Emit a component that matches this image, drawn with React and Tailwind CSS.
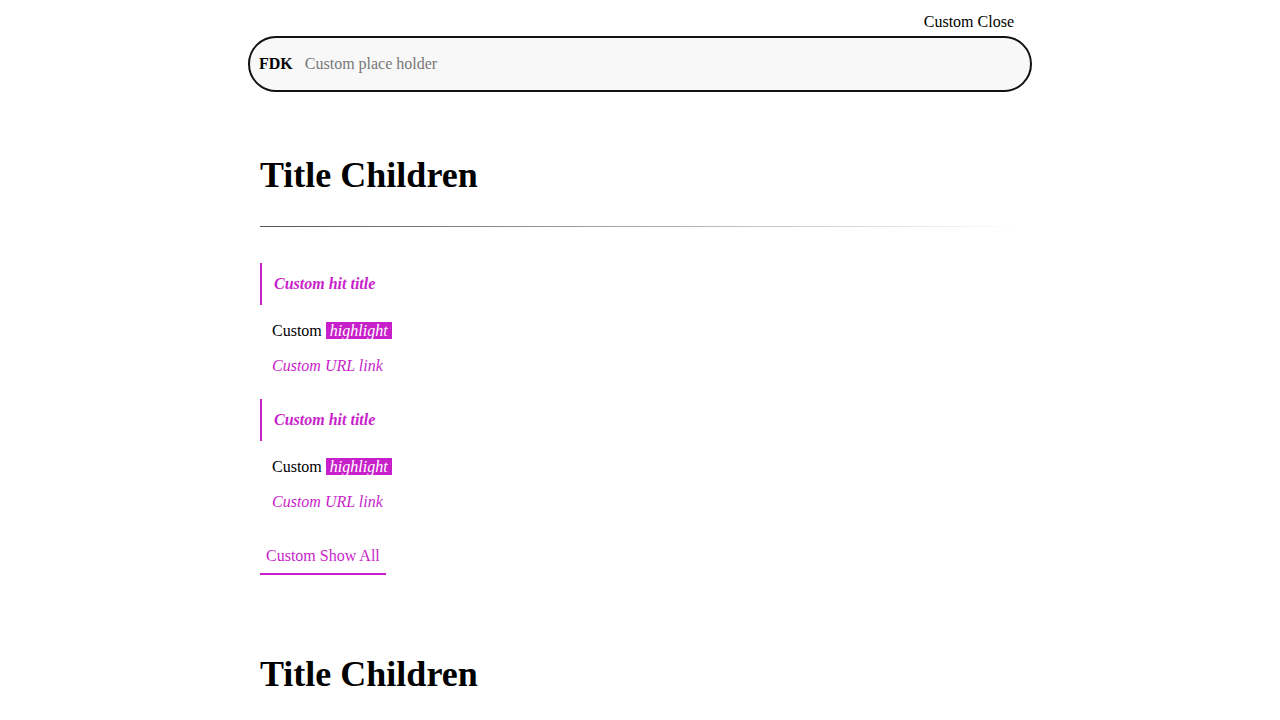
const HITS = [
  { id: 1, title: "Custom hit title", text: "Custom", mark: "highlight", link: "Custom URL link" },
  { id: 2, title: "Custom hit title", text: "Custom", mark: "highlight", link: "Custom URL link" },
];

function Section() {
  return (
    <section className="pt-[60px]">
      <h1 className="text-[36px] font-bold leading-[46px] text-black">Title Children</h1>
      <div className="mt-[28px] h-px bg-gradient-to-r from-[#555] to-transparent" />
      <div className="pt-[36px]">
        {HITS.map((h) => (
          <div key={h.id} className="mb-[24px]">
            <div className="border-l-2 border-[#c71fc9] pl-3 h-[42px] flex items-center">
              <span className="font-bold italic text-[#c71fc9]">{h.title}</span>
            </div>
            <p className="pl-3 mt-[17px] leading-[18px]">
              {h.text}{" "}
              <mark className="bg-[#c71fc9] text-white italic px-1">{h.mark}</mark>
            </p>
            <p className="pl-3 mt-[17px] italic text-[#c71fc9] leading-[18px]">{h.link}</p>
          </div>
        ))}
        <button className="mt-[12px] px-1.5 pb-2 border-b-2 border-[#c71fc9] text-[#c71fc9] leading-[18px]">
          Custom Show All
        </button>
      </div>
    </section>
  );
}

export default function App() {
  return (
    <div className="h-[720px] overflow-hidden bg-white text-black text-base font-['Liberation_Serif',serif]">
      <div className="w-[784px] mx-auto">
        <div className="flex justify-end pr-[18px] pt-[8px] h-[36px]">
          <button className="leading-[18px]">Custom Close</button>
        </div>
        <div className="h-[56px] rounded-full border-2 border-[#111] bg-[#f8f8f8] flex items-center px-[9px] gap-3">
          <span className="font-bold">FDK</span>
          <input
            className="flex-1 bg-transparent outline-none placeholder:text-[#777] font-['Liberation_Serif',serif]"
            placeholder="Custom place holder"
          />
        </div>
        <div className="px-3">
          <Section />
          <div className="mt-[16px]">
            <Section />
          </div>
        </div>
      </div>
    </div>
  );
}
